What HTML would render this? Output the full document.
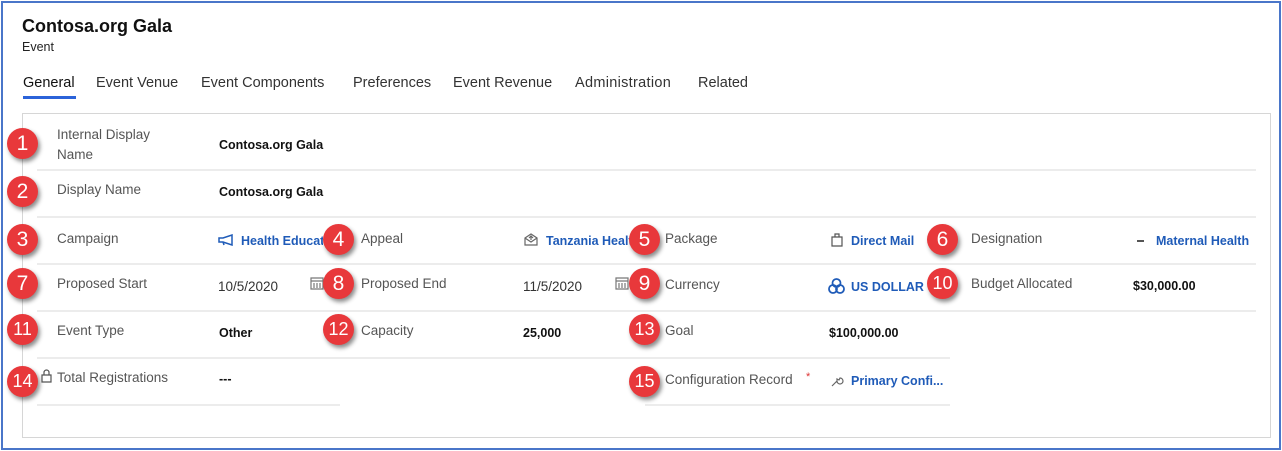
<!DOCTYPE html>
<html><head><meta charset="utf-8"><style>
*{margin:0;padding:0;box-sizing:border-box}
body{width:1282px;height:451px;overflow:hidden;background:#fff;font-family:"Liberation Sans",sans-serif;position:relative}
.abs{position:absolute;white-space:nowrap}
.outer{left:1px;top:1px;width:1280px;height:449px;border:2px solid #4a76c9}
.panel{left:22px;top:113px;width:1249px;height:325px;border:1px solid #d6d6d6}
.line{position:absolute;height:2px;background:#ececec}
.lbl{font-size:13.5px;color:#555}
.val{font-size:12.5px;color:#111;font-weight:bold}
.lnk{font-size:12.5px;color:#1f5bb8;font-weight:bold}
.tab{font-size:14.5px;color:#333;top:75px}
.b{position:absolute;width:31px;height:31px;border-radius:50%;background:#e8383b;color:#fff;font-size:21px;text-align:center;line-height:31px;box-shadow:2px 3px 4px rgba(0,0,0,.45)}
.b.s{font-size:18px}
.ic{position:absolute}
</style></head><body>
<div class="abs outer"></div>
<div class="abs" style="left:22px;top:16px;font-size:18px;font-weight:bold;color:#111">Contosa.org Gala</div>
<div class="abs" style="left:22px;top:40px;font-size:12.5px;color:#222">Event</div>
<div class="abs tab" style="left:23px;color:#111">General</div>
<div class="abs" style="left:23px;top:96px;width:53px;height:3px;background:#2b63d9"></div>
<div class="abs tab" style="left:96px">Event Venue</div>
<div class="abs tab" style="left:201px">Event Components</div>
<div class="abs tab" style="left:353px">Preferences</div>
<div class="abs tab" style="left:453px">Event Revenue</div>
<div class="abs tab" style="left:575px;letter-spacing:0.3px">Administration</div>
<div class="abs tab" style="left:698px">Related</div>
<div class="abs panel"></div>

<div class="line" style="left:37px;top:169px;width:1219px"></div>
<div class="line" style="left:37px;top:216px;width:1219px"></div>
<div class="line" style="left:37px;top:263px;width:1219px"></div>
<div class="line" style="left:37px;top:310px;width:1219px"></div>
<div class="line" style="left:37px;top:357px;width:913px"></div>
<div class="line" style="left:37px;top:404px;width:303px"></div>
<div class="line" style="left:645px;top:404px;width:305px"></div>

<div class="abs lbl" style="left:57px;top:125px;line-height:20px">Internal Display<br>Name</div>
<div class="abs val" style="left:219px;top:138px">Contosa.org Gala</div>
<div class="abs lbl" style="left:57px;top:182px">Display Name</div>
<div class="abs val" style="left:219px;top:185px">Contosa.org Gala</div>

<div class="abs lbl" style="left:57px;top:231px">Campaign</div>
<svg class="ic" style="left:218px;top:234px" width="18" height="12" viewBox="0 0 18 12"><path d="M1 4h4l9-3v10l-9-3H1z M5 8l1 3" fill="none" stroke="#1f5bb8" stroke-width="1.5"/></svg>
<div class="abs lnk" style="left:241px;top:234px;width:82px;overflow:hidden">Health Education</div>
<div class="abs lbl" style="left:361px;top:231px">Appeal</div>
<svg class="ic" style="left:524px;top:233px" width="14" height="13" viewBox="0 0 14 13"><path d="M1 5l6-4 6 4v7H1z M1 5l6 4 6-4 M5 5l2-2 2 2 M7 3v4" fill="none" stroke="#666" stroke-width="1.2"/></svg>
<div class="abs lnk" style="left:546px;top:234px;width:84px;overflow:hidden">Tanzania Health</div>
<div class="abs lbl" style="left:665px;top:231px">Package</div>
<svg class="ic" style="left:831px;top:233px" width="12" height="14" viewBox="0 0 12 14"><path d="M1 4h10v9H1z M4 4V1h4v3" fill="none" stroke="#555" stroke-width="1.2"/></svg>
<div class="abs lnk" style="left:851px;top:234px">Direct Mail</div>
<div class="abs lbl" style="left:971px;top:231px">Designation</div>
<div class="abs" style="left:1137px;top:240px;width:7px;height:2px;background:#555"></div>
<div class="abs lnk" style="left:1156px;top:234px">Maternal Health</div>

<div class="abs lbl" style="left:57px;top:276px">Proposed Start</div>
<div class="abs" style="left:218px;top:279px;font-size:13.5px;color:#333">10/5/2020</div>
<svg class="ic" style="left:310px;top:276px" width="14" height="14" viewBox="0 0 14 14"><path d="M1 2h12v11H1z M1 5h12 M4 7v5 M7 7v5 M10 7v5" fill="none" stroke="#777" stroke-width="1.2"/></svg>
<div class="abs lbl" style="left:361px;top:276px">Proposed End</div>
<div class="abs" style="left:523px;top:279px;font-size:13.5px;color:#333">11/5/2020</div>
<svg class="ic" style="left:615px;top:276px" width="14" height="14" viewBox="0 0 14 14"><path d="M1 2h12v11H1z M1 5h12 M4 7v5 M7 7v5 M10 7v5" fill="none" stroke="#777" stroke-width="1.2"/></svg>
<div class="abs lbl" style="left:665px;top:277px">Currency</div>
<svg class="ic" style="left:828px;top:278px" width="17" height="16" viewBox="0 0 17 16"><circle cx="8.5" cy="5" r="4" fill="none" stroke="#1f5bb8" stroke-width="1.8"/><circle cx="5" cy="11" r="4" fill="none" stroke="#1f5bb8" stroke-width="1.8"/><circle cx="12" cy="11" r="4" fill="none" stroke="#1f5bb8" stroke-width="1.8"/></svg>
<div class="abs lnk" style="left:851px;top:280px">US DOLLAR</div>
<div class="abs lbl" style="left:971px;top:276px">Budget Allocated</div>
<div class="abs val" style="left:1133px;top:279px">$30,000.00</div>

<div class="abs lbl" style="left:57px;top:323px">Event Type</div>
<div class="abs val" style="left:219px;top:326px">Other</div>
<div class="abs lbl" style="left:361px;top:323px">Capacity</div>
<div class="abs val" style="left:523px;top:326px">25,000</div>
<div class="abs lbl" style="left:665px;top:323px">Goal</div>
<div class="abs val" style="left:829px;top:326px">$100,000.00</div>

<svg class="ic" style="left:41px;top:369px" width="11" height="14" viewBox="0 0 11 14"><path d="M1 6h9v7H1z M3 6V3.5a2.5 2.5 0 0 1 5 0V6" fill="none" stroke="#555" stroke-width="1.2"/></svg>
<div class="abs lbl" style="left:57px;top:370px">Total Registrations</div>
<div class="abs val" style="left:219px;top:372px">---</div>
<div class="abs lbl" style="left:665px;top:372px">Configuration Record</div>
<div class="abs" style="left:806px;top:371px;font-size:11px;color:#d33">*</div>
<svg class="ic" style="left:830px;top:374px" width="14" height="14" viewBox="0 0 14 14"><path d="M2 12l5-5 M7 7a3 3 0 1 0 3-3l-1 2-2-1z" fill="none" stroke="#666" stroke-width="1.2"/></svg>
<div class="abs lnk" style="left:851px;top:374px">Primary Confi...</div>

<div class="b" style="left:7px;top:128px">1</div>
<div class="b" style="left:7px;top:176px">2</div>
<div class="b" style="left:7px;top:224px">3</div>
<div class="b" style="left:323px;top:224px">4</div>
<div class="b" style="left:629px;top:224px">5</div>
<div class="b" style="left:927px;top:224px">6</div>
<div class="b" style="left:7px;top:268px">7</div>
<div class="b" style="left:323px;top:268px">8</div>
<div class="b" style="left:629px;top:268px">9</div>
<div class="b s" style="left:927px;top:268px">10</div>
<div class="b s" style="left:7px;top:314px">11</div>
<div class="b s" style="left:323px;top:314px">12</div>
<div class="b s" style="left:629px;top:314px">13</div>
<div class="b s" style="left:7px;top:366px">14</div>
<div class="b s" style="left:629px;top:366px">15</div>
</body></html>
